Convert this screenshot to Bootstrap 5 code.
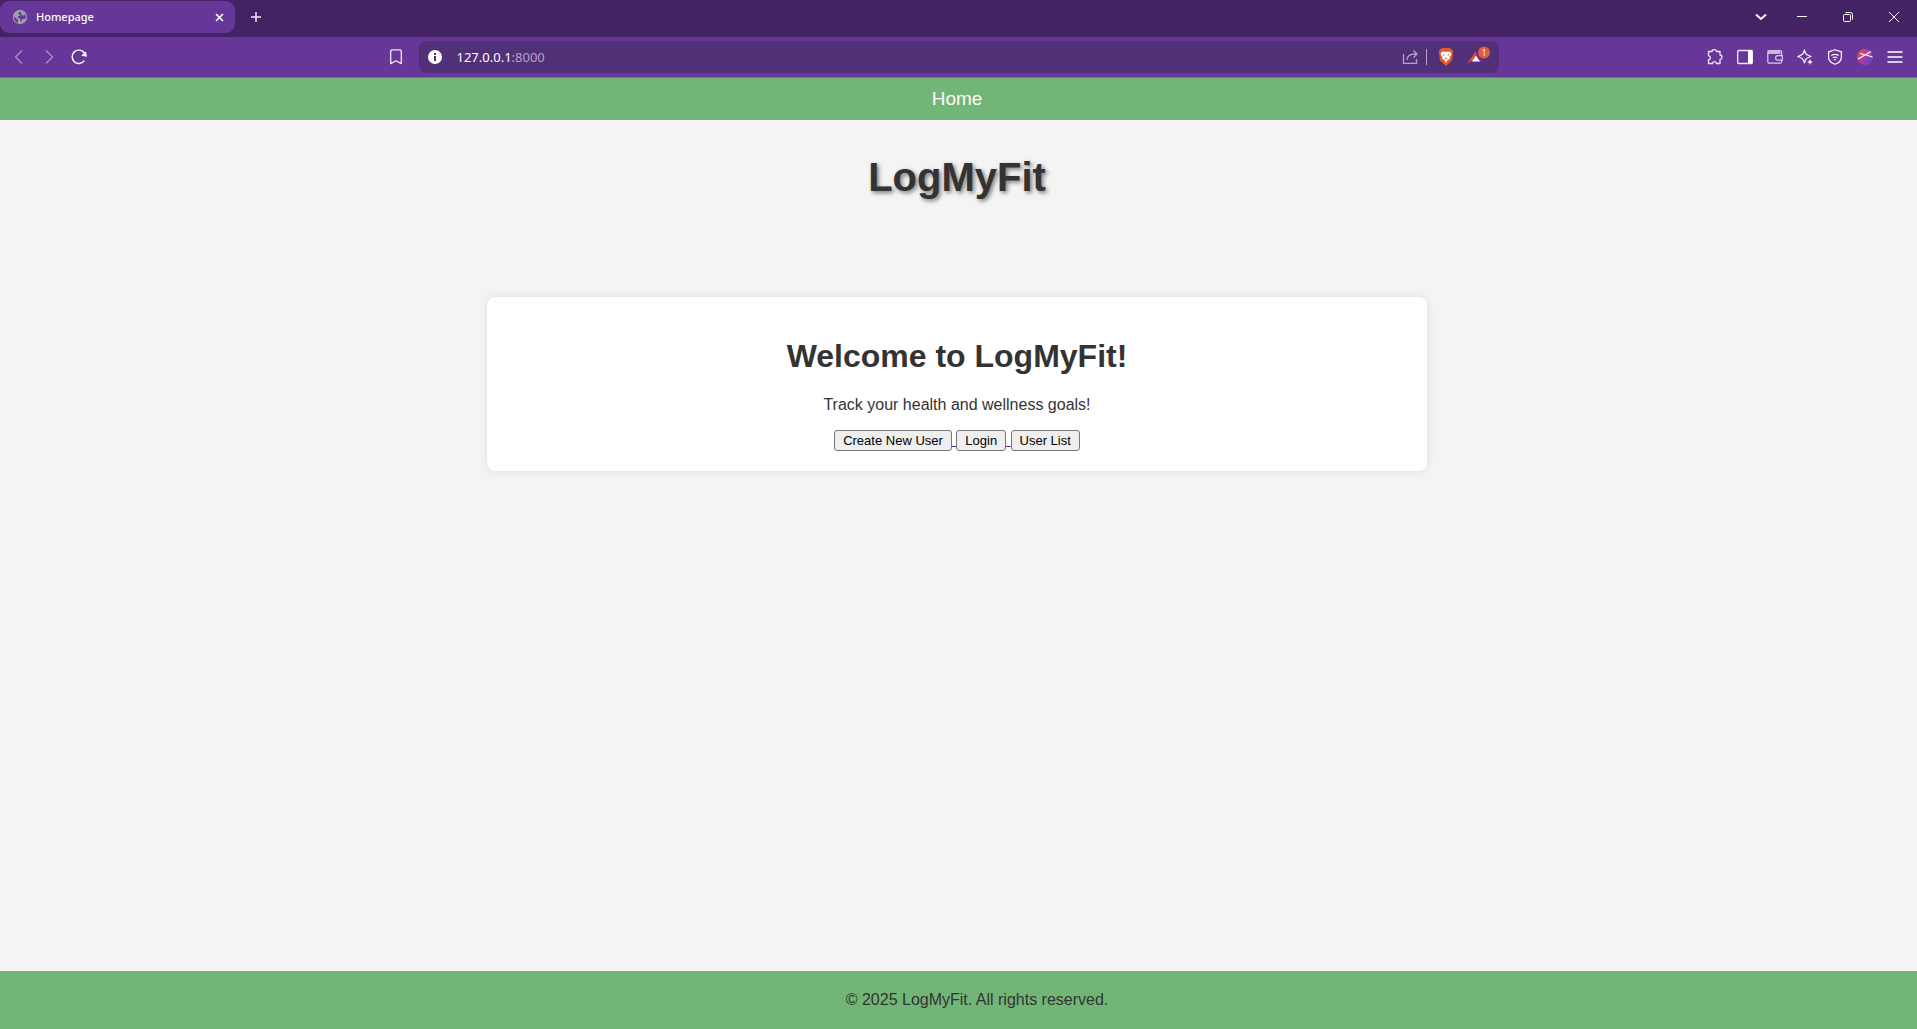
<!DOCTYPE html>
<html lang="en">
<head>
<meta charset="utf-8">
<meta name="viewport" content="width=device-width, initial-scale=1">
<title>Homepage</title>
<link href="https://cdn.jsdelivr.net/npm/bootstrap@5.3.0/dist/css/bootstrap.min.css" rel="stylesheet">
<style>
body{font-family:"Liberation Sans",Arial,sans-serif;font-size:16px;line-height:18px;color:#333;background:#f4f4f4}
svg{display:block;flex:none}
.chrome-ui{font-family:"Noto Sans","Open Sans",sans-serif;color:#fff}
.chrome-ui button{background:none;border:0;padding:0;color:#efe9f6;display:flex;align-items:center;justify-content:center}
.tab-strip{height:37px;background:#432364}
.browser-tab{width:235px;height:32px;margin-top:1px;padding:0 11px 0 12px;background:#673699;border-radius:9px;font-size:11px;font-weight:500}
.new-tab{margin:0 0 3px 13px}
.win-buttons{gap:30px;padding:0 15px 3px 0}
.tab-search{margin-right:-4px}
.toolbar{height:41px;background:#673699;border-bottom:1px solid #8a62b4}
.nav-side{flex:1 1 0;min-width:0}
.nav-buttons{gap:14px;padding-left:11px}
.tool-buttons{gap:14px;padding-right:14px}
.dim{opacity:.5}
.bookmark{margin-right:16px}
.address{flex:0 1 1080px;height:32px;padding:0 6px 0 8px;background:#523078;border-radius:8px}
.host{font-size:13px;margin-left:14px;color:#fff;flex:1}
.host span{color:#b3a3c6}
.divider{width:1px;height:16px;background:#b3a3c6;margin:0 8px 0 7px}
.site-nav,.site-main,.site-footer{padding-right:3px}
.site-nav{background:#71b677;height:42px;font-size:19px}
.site-nav a{color:#fff}
.brand-title{font-size:40px;line-height:46px;font-weight:700;margin:34px 0 0;text-shadow:2px 2px 4px rgba(0,0,0,.5)}
.welcome{width:940px;max-width:94%;margin:97px auto 0;padding:41px 20px 20px;background:#fff;border-radius:8px;box-shadow:0 0 10px rgba(0,0,0,.1)}
.welcome h2{font-size:32px;line-height:37px;font-weight:700;margin:0 0 21px}
.welcome p{margin:0 0 15px}
.actions{line-height:21px}
.actions a{color:#551a8b;text-decoration:underline}
.actions button{font-size:13px;line-height:15px;padding:2px 7px;border:1px solid #767676;border-radius:3px;background:#efefef;color:#000;padding:2px 8px}
.site-footer{background:#71b677;padding-top:20px;padding-bottom:20px;padding-left:40px}
</style>
</head>
<body class="d-flex flex-column min-vh-100">
<div class="chrome-ui">
  <div class="tab-strip d-flex justify-content-between">
    <div class="d-flex align-items-center">
      <div class="browser-tab d-flex align-items-center align-self-start">
        <svg width="16" height="16" viewBox="0 0 16 16"><circle cx="8" cy="8" r="7.2" fill="#9aa0a6"/><path d="M9 2.500C7.500 3 6 3.700 6.500 5c.5 1 2 .5 2 2H6v1.500L8.500 10v2.500L7 14l-1-.2V11L2.300 7.500 2 9c.5 3 2.500 4.600 5 5l3-2.500V10h2.500L14 8.500C14 7 13.500 6 12.500 5v1.500H10.500L9 5Z" fill="#673699"/></svg>
        <span class="ms-2 flex-grow-1">Homepage</span>
        <button type="button" aria-label="Close tab"><svg width="9" height="9" viewBox="0 0 9 9" fill="none" stroke="#fff" stroke-width="1.600"><path d="m1 1 7 7M8 1 1 8"/></svg></button>
      </div>
      <button class="new-tab" type="button" aria-label="New tab"><svg width="16" height="16" viewBox="0 0 16 16" fill="none" stroke="currentColor" stroke-width="1.500"><path d="M8 3v10M3 8h10"/></svg></button>
    </div>
    <div class="win-buttons d-flex align-items-center">
      <button class="tab-search" type="button" aria-label="Search tabs"><svg width="14" height="14" viewBox="0 0 14 14" fill="none" stroke="#fff" stroke-width="2"><path d="m2 4.500 5 4.500 5-4.500"/></svg></button>
      <button type="button" aria-label="Minimize"><svg width="16" height="16" viewBox="0 0 16 16" fill="none" stroke="#fff"><path d="M3 7.500h10"/></svg></button>
      <button type="button" aria-label="Restore"><svg width="16" height="16" viewBox="0 0 16 16" fill="none" stroke="#fff"><rect x="3.500" y="5.500" width="7" height="7" rx="1"/><path d="M5.500 3.500h5a2 2 0 0 1 2 2v5"/></svg></button>
      <button type="button" aria-label="Close"><svg width="16" height="16" viewBox="0 0 16 16" fill="none" stroke="#fff"><path d="m3 3 10 10M13 3 3 13"/></svg></button>
    </div>
  </div>
  <div class="toolbar d-flex align-items-center">
    <div class="nav-side d-flex align-items-center justify-content-between">
      <div class="nav-buttons d-flex">
        <button class="dim" type="button" aria-label="Back"><svg width="16" height="16" viewBox="0 0 16 16" fill="none" stroke="currentColor" stroke-width="1.300"><path d="M11 1.500 4.500 8 11 14.500"/></svg></button>
        <button class="dim" type="button" aria-label="Forward"><svg width="16" height="16" viewBox="0 0 16 16" fill="none" stroke="currentColor" stroke-width="1.300"><path d="M5 1.500 11.500 8 5 14.500"/></svg></button>
        <button type="button" aria-label="Reload"><svg width="16" height="16" viewBox="0 0 16 16" fill="none" stroke="#fff" stroke-width="1.400"><path d="M13.300 11.700A6.700 6.700 0 1 1 13.500 4.200"/><path d="M11.800 6.300 14.500 3.800l.6 3Z" fill="#fff"/></svg></button>
      </div>
      <button class="bookmark" type="button" aria-label="Bookmark"><svg width="14" height="16" viewBox="0 0 14 16" fill="none" stroke="currentColor" stroke-width="1.300"><path d="M1.700 14.600V2.200q0-1.300 1.300-1.300h8q1.300 0 1.300 1.300v12.400L7 11.800Z" stroke-linejoin="round"/></svg></button>
    </div>
    <div class="address d-flex align-items-center">
      <svg width="16" height="16" viewBox="0 0 16 16"><circle cx="8" cy="8" r="7" fill="#fff"/><path d="M7 7h2v5H7zM7 4h2v2H7z" fill="#523078"/></svg>
      <div class="host">127.0.0.1<span>:8000</span></div>
      <button type="button" aria-label="Share"><svg width="17" height="16" viewBox="0 0 17 16" fill="none" stroke="#b3a3c6" stroke-width="1.300"><path d="M1.500 5v9.300h13V10M5 11c.2-4 3-6 8-6h2M11.500 1.500 15 5l-3.500 3.500"/></svg></button>
      <span class="divider"></span>
      <button type="button" aria-label="Brave Shields"><svg width="22" height="20" viewBox="0 0 22 20"><path d="M7 1h8l3.500 3-.6 2L17 13.500 11 19 5 13.500 4.100 6l-.6-2Z" fill="#e25a29"/><path d="M6.500 5 9 4.500l2 .5 2-.5 2.500.5L16.500 7.500 14.500 10l.5 1.700-2.500 1.300L11 16l-1.500-3L7 11.700 7.500 10 5.500 7.500Z" fill="#fff"/><path d="m7.500 7 2 .7-.5 1.500ZM14.500 7l-2 .7.5 1.500ZM9.500 11.500 11 10.700l1.500.8L11 12.500Z" fill="#e25a29"/></svg></button>
      <button class="ms-2" type="button" aria-label="Rewards, 1 notification"><svg width="28" height="22" viewBox="0 0 28 22"><path d="M11 5 2 18h4l5-7Z" fill="#e4502c"/><path d="m11 5 9 13h-4l-5-7Z" fill="#85267a"/><path d="m2 18 4-3h10l4 3Z" fill="#562a9c"/><path d="m11 9.500-4 6h8Z" fill="#fff"/><circle cx="19" cy="6.500" r="6" fill="#df5d3c"/><text x="19" y="9.500" font-size="8" text-anchor="middle" fill="#fff">1</text></svg></button>
    </div>
    <div class="nav-side d-flex justify-content-end">
      <div class="tool-buttons d-flex">
        <button type="button" aria-label="Extensions"><svg width="16" height="16" viewBox="0 0 16 16" fill="none" stroke="currentColor" stroke-width="1.300" stroke-linejoin="round"><path d="M1.500 2.500H5C5 0 9.500 0 9.500 2.500H13V6c2.700.2 2.700 4 0 4.500v4H9.500C9 12 6 12 5.500 14.500h-4V11C4 10.500 4 7 1.500 6.500Z"/></svg></button>
        <button type="button" aria-label="Sidebar"><svg width="16" height="16" viewBox="0 0 16 16" fill="none" stroke="currentColor" stroke-width="1.300"><rect x=".7" y="1.500" width="14.600" height="13" rx="1"/><path d="M11 1.500h4.300v13H11Z" fill="#fff" stroke="none"/></svg></button>
        <button type="button" aria-label="Wallet"><svg width="16" height="16" viewBox="0 0 16 16" fill="none" stroke="#d9cbe6" stroke-width="1.200"><rect x=".8" y="1.500" width="13.800" height="12.700" rx="1.500"/><path d="M1 1.500h12.500v3.500H1Z" fill="#c8b5da" stroke="none"/><path d="M15.300 6.700h-4.500a2.200 2.200 0 0 0 0 4.400h4.500Z" fill="#673699"/></svg></button>
        <button type="button" aria-label="Leo AI"><svg width="16" height="16" viewBox="0 0 16 16" fill="none" stroke="#fff" stroke-width="1.200" stroke-linejoin="round"><path d="M7.500 1C8.300 5 9 6 14 7.500 9 9 8.300 10 7.500 14 6.500 10 5.500 9 .8 7.500 5.500 6 6.500 5 7.500 1Z"/><path d="m13 10 1 2 2 1-2 1-1 2-1-2-2-1 2-1Z" fill="#fff" stroke="#673699" stroke-width=".3"/></svg></button>
        <button type="button" aria-label="VPN"><svg width="16" height="16" viewBox="0 0 16 16" fill="none" stroke="#fff" stroke-width="1.200"><path d="m8 .7 6.400 2.200v5c0 3.500-2.700 6-6.400 7.300C4.300 14 1.600 11.500 1.600 8V2.900Z" stroke-linejoin="round"/><path d="M4.300 6.500q3.700-2.400 7.400 0M5.800 8.700q2.200-1.400 4.400 0M7 10.800q1-.6 2 0"/></svg></button>
        <button type="button" aria-label="Profile"><svg width="16" height="16" viewBox="0 0 16 16"><defs><linearGradient id="pg" x1="0" y1="0" x2="1" y2="1"><stop stop-color="#e8503c"/><stop offset=".5" stop-color="#b23aa0"/><stop offset="1" stop-color="#4747e0"/></linearGradient></defs><circle cx="8" cy="8" r="8" fill="url(#pg)"/><path d="M1 10 14 2.500M3 4.500 9 6l6.500 2" stroke="#fff" stroke-width="1.100" fill="none"/></svg></button>
        <button type="button" aria-label="Menu"><svg width="16" height="16" viewBox="0 0 16 16" fill="none" stroke="#fff"><path d="M.5 3h15M.5 8h15M.5 13h15" stroke-width="1.300"/></svg></button>
      </div>
    </div>
  </div>
</div>
<nav class="site-nav d-flex align-items-center justify-content-center"><a class="text-decoration-none" href="#">Home</a></nav>
<main class="site-main flex-grow-1 text-center">
  <h1 class="brand-title">LogMyFit</h1>
  <section class="welcome">
    <h2>Welcome to LogMyFit!</h2>
    <p>Track your health and wellness goals!</p>
    <div class="actions"><a href="#"><button type="button">Create New User</button> </a><a href="#"><button type="button">Login</button> </a><a href="#"><button type="button">User List</button></a></div>
  </section>
</main>
<footer class="site-footer text-center">© 2025 LogMyFit. All rights reserved.</footer>
<script src="https://cdn.jsdelivr.net/npm/bootstrap@5.3.0/dist/js/bootstrap.bundle.min.js"></script>
</body>
</html>
